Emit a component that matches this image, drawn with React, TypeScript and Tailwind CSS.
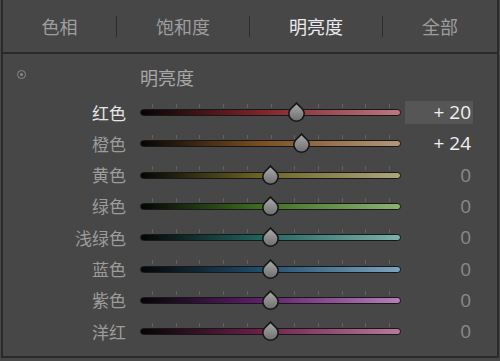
import React from "react";

interface ColorRow {
  name: string;
  value: number;
  mid: string;
  end: string;
}

const rows: ColorRow[] = [
  { name: "红色", value: 20, mid: "#7c2228", end: "#bc7880" },
  { name: "橙色", value: 24, mid: "#7a4c1e", end: "#b4967a" },
  { name: "黄色", value: 0, mid: "#6a6222", end: "#aca67c" },
  { name: "绿色", value: 0, mid: "#3c6c1e", end: "#8cb274" },
  { name: "浅绿色", value: 0, mid: "#1e625e", end: "#7cb2aa" },
  { name: "蓝色", value: 0, mid: "#1e4c6c", end: "#7ca4c0" },
  { name: "紫色", value: 0, mid: "#5e1e6a", end: "#b480b8" },
  { name: "洋红", value: 0, mid: "#6c1e48", end: "#b87a9a" },
];

const tabs = ["色相", "饱和度", "明亮度", "全部"];
const activeTab = "明亮度";
const activeRow = "红色";

const TRACK_W = 261;
const ticks = Array.from({ length: 11 }, (_, i) => 12 + i * 23.7);

function Thumb() {
  return (
    <svg width="19" height="20" viewBox="0 0 19 20">
      <defs>
        <linearGradient id="thumbFill" x1="0" y1="0" x2="0" y2="1">
          <stop offset="0" stopColor="#acacac" />
          <stop offset="1" stopColor="#6e6e6e" />
        </linearGradient>
      </defs>
      <path
        d="M9.5 1 C11.4 3.8 17.2 6.6 17.2 11.5 A7.7 7.7 0 0 1 1.8 11.5 C1.8 6.6 7.6 3.8 9.5 1 Z"
        fill="url(#thumbFill)"
        stroke="#171717"
        strokeWidth="1.6"
      />
    </svg>
  );
}

function Slider({ row }: { row: ColorRow }) {
  const center = ((row.value + 100) / 200) * TRACK_W;
  return (
    <div className="relative h-full w-[261px]">
      {ticks.map((x) => (
        <div
          key={x}
          className="absolute top-[7px] h-[4px] w-px bg-[#626262]"
          style={{ left: x }}
        />
      ))}
      <div
        className="absolute top-[12.5px] h-[7px] w-full rounded-full border border-[#181818]"
        style={{
          background: `linear-gradient(to right, #050505 0%, ${row.mid} 45%, ${row.end} 100%)`,
        }}
      />
      <div className="absolute top-[5.5px]" style={{ left: center - 9.5 }}>
        <Thumb />
      </div>
    </div>
  );
}

export default function App() {
  return (
    <div
      className="h-[361px] w-[500px] bg-[#474747] pl-px"
      style={{ fontFamily: '"Noto Sans CJK SC", "Noto Sans", sans-serif' }}
    >
      <div className="h-[358px] w-[498px] border-x-2 border-b-2 border-[#2a2a2a]">
        {/* Tabs */}
        <div className="flex h-[54px] items-center border-b-2 border-[#2a2a2a]">
          {tabs.map((t, i) => (
            <React.Fragment key={t}>
              {i > 0 && <div className="h-[21px] w-px bg-[#2c2c2c]" />}
              <div
                className={
                  "flex h-full items-center justify-center text-[18px] " +
                  (i === 0 ? "w-[113px] " : i === 3 ? "flex-1 " : "w-[132px] ") +
                  (t === activeTab ? "text-[#ececec]" : "text-[#9e9e9e]")
                }
              >
                {t}
              </div>
            </React.Fragment>
          ))}
        </div>

        {/* Section header */}
        <div className="flex h-[42.65px] items-center pt-[4px]">
          <div className="ml-[14px] -mt-[6px] flex h-[9px] w-[9px] items-center justify-center rounded-full border border-[#8a8a8a]">
            <div className="h-[3px] w-[3px] rounded-full bg-[#8a8a8a]" />
          </div>
          <div className="ml-[114px] text-[18px] text-[#a8a8a8]">明亮度</div>
        </div>

        {/* Rows */}
        <div className="flex flex-col">
          {rows.map((row) => (
            <div key={row.name} className="flex h-[31.3px] items-center">
              <div
                className={
                  "w-[123px] text-right text-[17px] " +
                  (row.name === activeRow ? "text-[#e6e6e6]" : "text-[#9c9c9c]")
                }
              >
                {row.name}
              </div>
              <div className="ml-[14px] h-full">
                <Slider row={row} />
              </div>
              <div
                className={
                  "ml-[4px] flex h-[23px] w-[68px] items-center justify-end pr-[2px] text-[19px] " +
                  (row.name === activeRow ? "bg-[#565656] " : "") +
                  (row.value !== 0 ? "text-[#f0f0f0]" : "text-[#8a8a8a]")
                }
                style={{ fontFamily: '"Open Sans", sans-serif' }}
              >
                {row.value > 0 ? `+ ${row.value}` : row.value}
              </div>
            </div>
          ))}
        </div>
      </div>
    </div>
  );
}
